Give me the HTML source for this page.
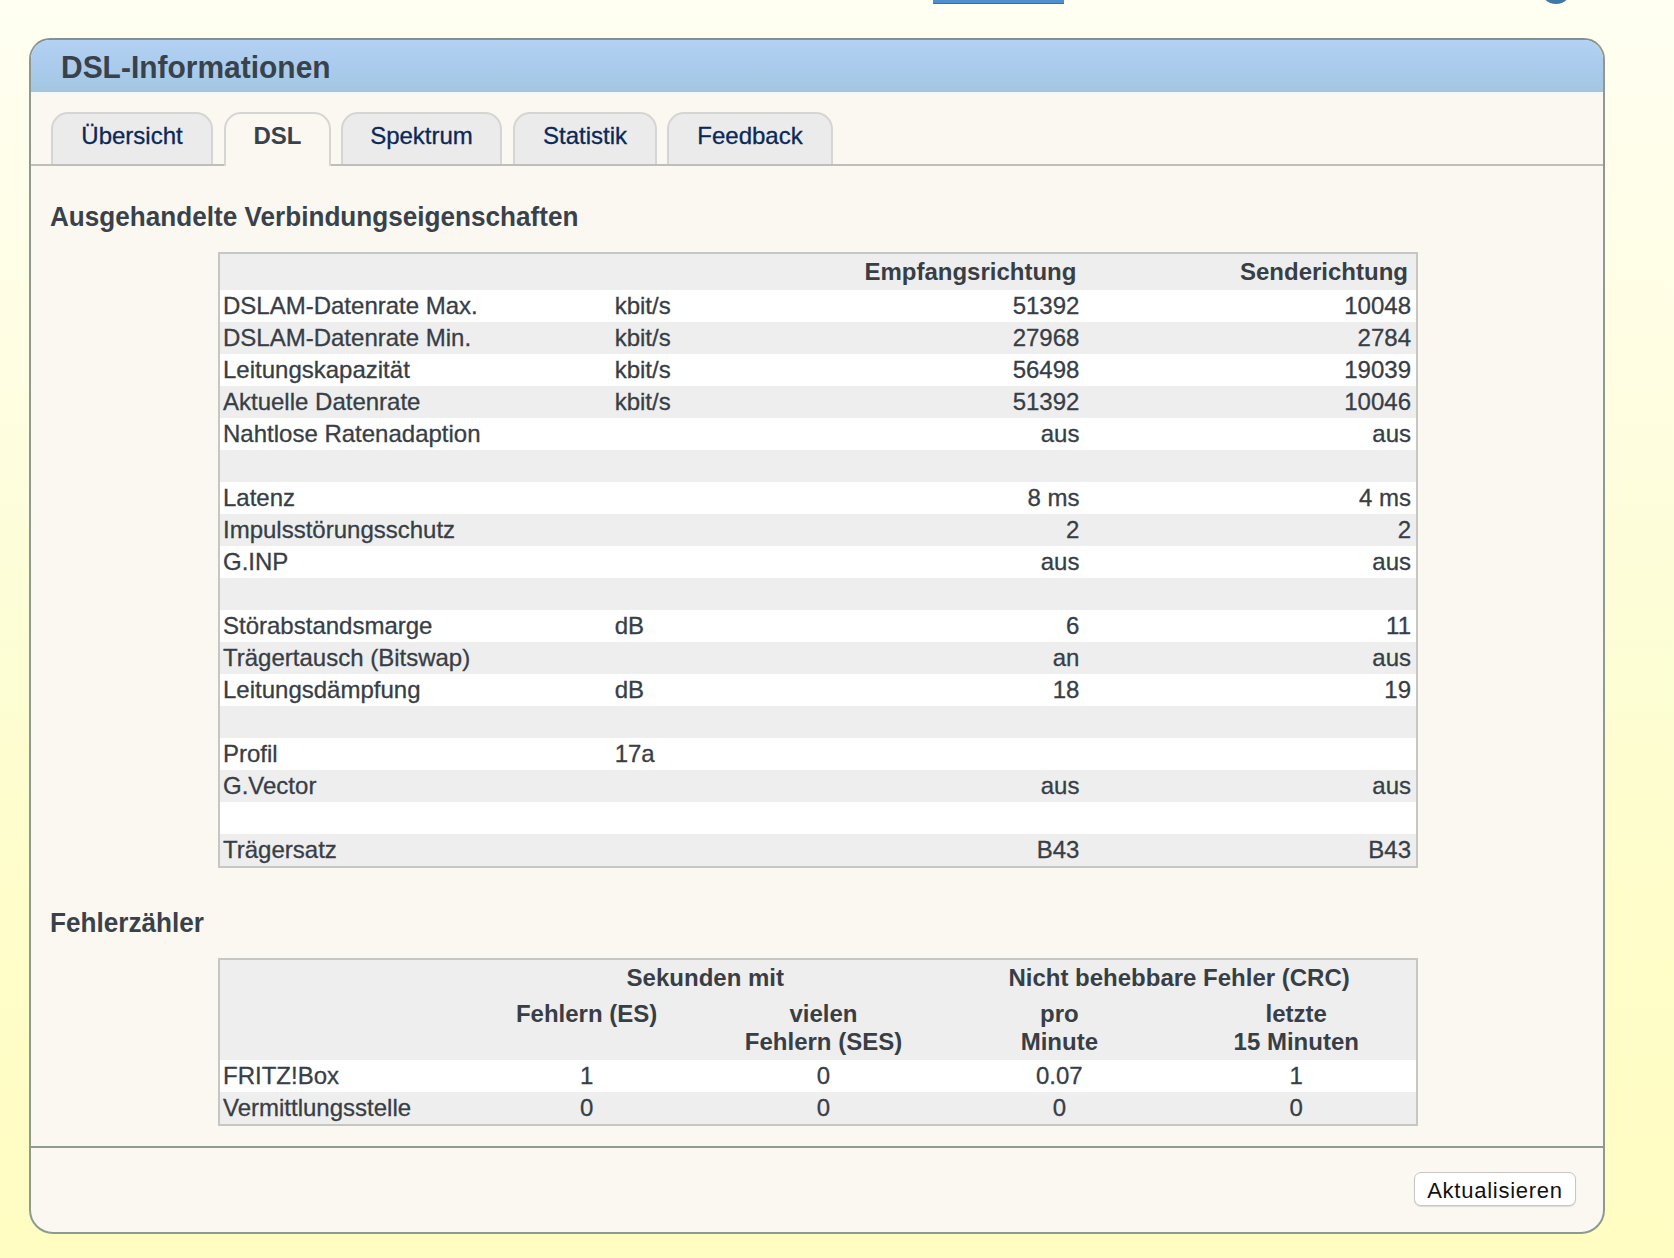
<!DOCTYPE html>
<html><head><meta charset="utf-8">
<style>
html,body{margin:0;padding:0}
body{width:1674px;height:1258px;overflow:hidden;position:relative;
 background:linear-gradient(to bottom,#fffff2 0%,#fffee5 24%,#fdfdd7 48%,#fffdca 72%,#fffdc2 100%);
 font-family:"Liberation Sans",sans-serif;color:#383e46}
td,.tab{-webkit-text-stroke:0.3px currentColor}
.tab.act{-webkit-text-stroke:0}
.topbar{position:absolute;left:933px;top:0;width:131px;height:3px;background:#4d8fd1;border-bottom:1px solid #3f6f9f}
.topdot{position:absolute;left:1541px;top:-24px;width:30px;height:28px;border-radius:50%;background:#3f78a8}
.panel{position:absolute;left:29px;top:38px;width:1572px;height:1192px;border:2px solid #8e9a90;border-top-color:#82928f;border-radius:21px 21px 24px 24px;background:#fbf8f2;overflow:hidden}
.content{position:absolute;left:32px;top:40px;width:1570px;height:1190px}
.hdr{position:absolute;left:0;top:0;width:100%;height:52px;border-bottom:3px solid #f4f8f6;background:linear-gradient(to bottom,#b2d1f3 0%,#abcbec 50%,#a3c8e4 92%,#aec0dc 100%)}
.hdr h1{position:absolute;left:30px;top:2px;margin:0;font-size:31.5px;font-weight:bold;line-height:51px;transform:scaleX(0.951);transform-origin:0 0;color:#39424b}
.tabline{position:absolute;left:0;top:124px;width:100%;height:2px;background:#bebebc}
.tab{position:absolute;top:72px;height:52px;border:2px solid #d5d5d3;border-bottom:none;border-radius:17px 17px 0 0;background:#ebebeb;
 font-size:24px;line-height:43px;text-align:center;color:#0a2858;box-sizing:border-box}
.tab.act{background:#fbf8f2;color:#39424b;font-weight:bold;height:54px;border-color:#d6d6d4;z-index:2}
h2{position:absolute;left:18px;margin:0;font-size:26.8px;transform:scaleX(0.975);transform-origin:0 0;font-weight:bold;color:#39424b;line-height:30px}
table{position:absolute;left:186px;border-collapse:collapse;border:2px solid #c6c6c2;table-layout:fixed;width:1200px}
td,th{font-size:24px;padding:0;white-space:nowrap;overflow:hidden}
tr.g{background:#eeeeee}
tr.w{background:#ffffff}
.t1 th{height:36px;line-height:28px;padding:4px 8px 4px 3px;font-weight:bold;text-align:right;box-sizing:border-box}
.t1 td{height:32px;line-height:28px;padding:2px 5px 2px 3px;box-sizing:border-box}
.r{text-align:right}
.c{text-align:center}
.t2 th{line-height:28px;padding:4px 0 4px;font-weight:bold;text-align:center;vertical-align:top;box-sizing:border-box}
.t2 td{height:32px;line-height:28px;padding:2px 3px 2px 3px;box-sizing:border-box;text-align:center}
.t2 td.l{text-align:left}
.sep{position:absolute;left:0;top:1106px;width:100%;height:2px;background:#8f9b95}
.btn{position:absolute;left:1382px;top:1132px;width:162px;height:34px;box-sizing:border-box;border:1px solid #c6c6c4;border-radius:7px;background:#fff;
 font-size:22px;line-height:35px;text-align:center;color:#111;letter-spacing:0.75px;box-shadow:0 1px 1px rgba(0,0,0,0.12)}
</style></head><body>
<div class="topbar"></div>
<div class="topdot"></div>
<div class="panel">
 <div class="hdr"><h1>DSL-Informationen</h1></div>
 <div class="tabline"></div>
 <div class="sep"></div>
</div>
<div class="content">
 <div class="tab" style="left:19px;width:162px">Übersicht</div>
 <div class="tab act" style="left:192px;width:107px">DSL</div>
 <div class="tab" style="left:309px;width:161px">Spektrum</div>
 <div class="tab" style="left:481px;width:144px">Statistik</div>
 <div class="tab" style="left:635px;width:166px">Feedback</div>

 <h2 style="top:162px">Ausgehandelte Verbindungseigenschaften</h2>
 <table class="t1" style="top:212px">
  <colgroup><col style="width:392px"><col style="width:140px"><col style="width:332px"><col style="width:332px"></colgroup>
  <tr class="g"><th></th><th></th><th>Empfangsrichtung</th><th>Senderichtung</th></tr>
  <tr class="w"><td>DSLAM-Datenrate Max.</td><td>kbit/s</td><td class="r">51392</td><td class="r">10048</td></tr>
  <tr class="g"><td>DSLAM-Datenrate Min.</td><td>kbit/s</td><td class="r">27968</td><td class="r">2784</td></tr>
  <tr class="w"><td>Leitungskapazität</td><td>kbit/s</td><td class="r">56498</td><td class="r">19039</td></tr>
  <tr class="g"><td>Aktuelle Datenrate</td><td>kbit/s</td><td class="r">51392</td><td class="r">10046</td></tr>
  <tr class="w"><td>Nahtlose Ratenadaption</td><td></td><td class="r">aus</td><td class="r">aus</td></tr>
  <tr class="g"><td></td><td></td><td></td><td></td></tr>
  <tr class="w"><td>Latenz</td><td></td><td class="r">8 ms</td><td class="r">4 ms</td></tr>
  <tr class="g"><td>Impulsstörungsschutz</td><td></td><td class="r">2</td><td class="r">2</td></tr>
  <tr class="w"><td>G.INP</td><td></td><td class="r">aus</td><td class="r">aus</td></tr>
  <tr class="g"><td></td><td></td><td></td><td></td></tr>
  <tr class="w"><td>Störabstandsmarge</td><td>dB</td><td class="r">6</td><td class="r">11</td></tr>
  <tr class="g"><td>Trägertausch (Bitswap)</td><td></td><td class="r">an</td><td class="r">aus</td></tr>
  <tr class="w"><td>Leitungsdämpfung</td><td>dB</td><td class="r">18</td><td class="r">19</td></tr>
  <tr class="g"><td></td><td></td><td></td><td></td></tr>
  <tr class="w"><td>Profil</td><td>17a</td><td class="r"></td><td class="r"></td></tr>
  <tr class="g"><td>G.Vector</td><td></td><td class="r">aus</td><td class="r">aus</td></tr>
  <tr class="w"><td></td><td></td><td></td><td></td></tr>
  <tr class="g"><td>Trägersatz</td><td></td><td class="r">B43</td><td class="r">B43</td></tr>
 </table>

 <h2 style="top:868px">Fehlerzähler</h2>
 <table class="t2" style="top:918px">
  <colgroup><col style="width:249px"><col style="width:236px"><col style="width:237px"><col style="width:234px"><col style="width:240px"></colgroup>
  <tr class="g"><th style="height:36px"></th><th colspan="2" style="height:36px">Sekunden mit</th><th colspan="2" style="height:36px">Nicht behebbare Fehler (CRC)</th></tr>
  <tr class="g"><th style="height:64px"></th><th>Fehlern (ES)</th><th>vielen<br>Fehlern (SES)</th><th>pro<br>Minute</th><th>letzte<br>15 Minuten</th></tr>
  <tr class="w"><td class="l">FRITZ!Box</td><td>1</td><td>0</td><td>0.07</td><td>1</td></tr>
  <tr class="g"><td class="l">Vermittlungsstelle</td><td>0</td><td>0</td><td>0</td><td>0</td></tr>
 </table>

 <div class="btn">Aktualisieren</div>
</div>
</body></html>
